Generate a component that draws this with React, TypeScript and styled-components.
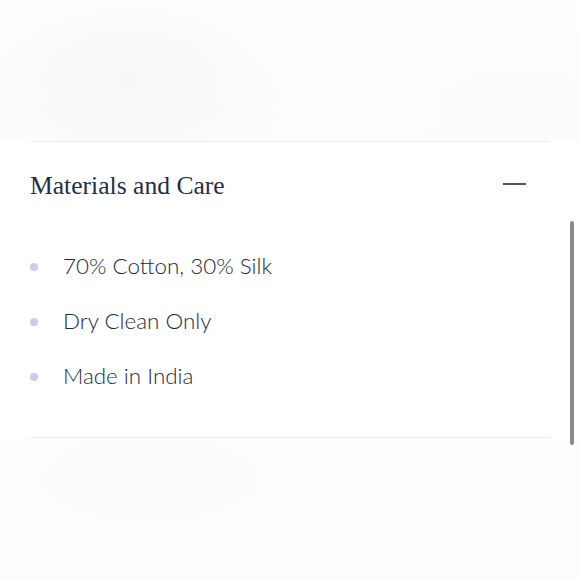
import React from "react";
import styled, { createGlobalStyle } from "styled-components";

const Global = createGlobalStyle`
  html, body { margin: 0; padding: 0; background: #ffffff; }
  body { font-family: "Liberation Sans", Arial, sans-serif; }
`;

const Page = styled.div`
  position: relative;
  width: 580px;
  height: 580px;
  overflow: hidden;
  background: #ffffff;
  display: flex;
  flex-direction: column;
`;

const Backdrop = styled.div`
  height: 141px;
  flex-shrink: 0;
  background:
    radial-gradient(ellipse 170px 100px at 130px 80px, #f8f8f9 0%, rgba(252,252,252,0) 100%),
    radial-gradient(ellipse 120px 60px at 520px 100px, #fbfbfb 0%, rgba(253,253,253,0) 100%),
    linear-gradient(#fefefe, #fcfcfc);
`;

const Section = styled.section`
  margin: 0 30px;
  border-top: 1px solid #ededed;
  border-bottom: 1px solid #ededed;
`;

const Header = styled.div`
  display: flex;
  align-items: center;
  justify-content: space-between;
  height: 88px;
  padding-right: 24px;
`;

const Title = styled.h2`
  margin: 0;
  font-family: "Liberation Serif", "Times New Roman", serif;
  font-weight: 400;
  font-size: 25.6px;
  color: #1c3048;
`;

const Dash = styled.span`
  display: block;
  width: 23px;
  height: 2px;
  background: #4a5563;
  margin-top: -4px;
`;

const List = styled.ul`
  list-style: none;
  margin: 0;
  padding: 22px 0 49px;
  display: flex;
  flex-direction: column;
  gap: 29px;
`;

const Item = styled.li`
  display: flex;
  align-items: center;
  height: 26px;
  font-family: "Lato", "Liberation Sans", sans-serif;
  font-weight: 300;
  font-size: 22.4px;
  color: #1d2a3a;
`;

const Dot = styled.span`
  width: 8px;
  height: 8px;
  border-radius: 50%;
  background: #d5c7ea;
  margin: 4px 25px 0 0;
  flex-shrink: 0;
`;

const Bottom = styled.div`
  flex: 1;
  background:
    radial-gradient(ellipse 200px 80px at 150px 40px, #fbfbfb 0%, rgba(253,253,253,0) 100%),
    #fdfdfd;
`;

const Scrollbar = styled.div`
  position: absolute;
  right: 6px;
  top: 221px;
  width: 4px;
  height: 224px;
  border-radius: 2px;
  background: #8a8a8a;
`;

const items = ["70% Cotton, 30% Silk", "Dry Clean Only", "Made in India"];

export default function App() {
  return (
    <Page>
      <Global />
      <Backdrop />
      <Section>
        <Header>
          <Title>Materials and Care</Title>
          <Dash />
        </Header>
        <List>
          {items.map((t) => (
            <Item key={t}>
              <Dot />
              {t}
            </Item>
          ))}
        </List>
      </Section>
      <Bottom />
      <Scrollbar />
    </Page>
  );
}
